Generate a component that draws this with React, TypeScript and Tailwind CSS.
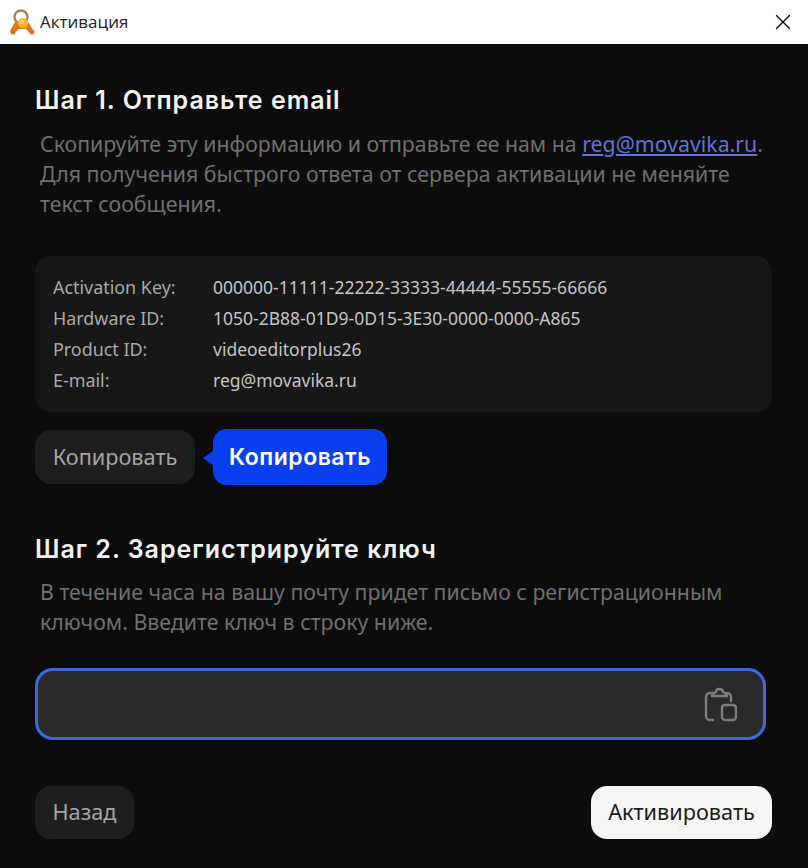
import React from "react";
import { X } from "lucide-react";

const rows = [
  ["Activation Key:", "000000-11111-22222-33333-44444-55555-66666"],
  ["Hardware ID:", "1050-2B88-01D9-0D15-3E30-0000-0000-A865"],
  ["Product ID:", "videoeditorplus26"],
  ["E-mail:", "reg@movavika.ru"],
];

const KeyIcon = () => (
  <svg width="26" height="28" viewBox="0 0 26 28" className="shrink-0">
    <circle cx="12" cy="9" r="6.5" fill="none" stroke="#a8825e" strokeWidth="2.4" />
    <path d="M1 23 L6 14 L14 12 L20 15 L25 24 L22 26 L17 21 L10 21 L4 26 Z" fill="#dd7a1c" />
    <circle cx="4" cy="24" r="2.5" fill="#e0701a" />
    <circle cx="23" cy="24" r="2.5" fill="#e0701a" />
    <circle cx="14" cy="15" r="5" fill="#f5b52e" />
    <circle cx="13" cy="14" r="2" fill="#fbd86a" />
  </svg>
);

const ClipboardIcon = () => (
  <svg width="34" height="36" viewBox="0 0 34 36" fill="none" stroke="#7d7d7d" strokeWidth="2.4" strokeLinecap="round" strokeLinejoin="round">
    <path d="M10 34H7a4 4 0 0 1-4-4V11a4 4 0 0 1 4-4h2" />
    <path d="M23 7h1a4 4 0 0 1 4 4v4" />
    <path d="M9 10c0-3 2-3 4-4 0-4 7-4 7 0 2 1 4 1 4 4z" />
    <rect x="19" y="19" width="14" height="15" rx="3" />
  </svg>
);

export default function App() {
  return (
    <div className="w-[808px] h-[868px] overflow-hidden flex flex-col bg-[#0c0c0d] font-['Noto_Sans',sans-serif]">
      <div className="h-[44px] bg-white flex items-center pl-[9px] pr-[12px] text-black">
        <KeyIcon />
        <span className="ml-[5px] text-[17px] font-['Open_Sans',sans-serif] text-[#222]">Активация</span>
        <X size={26} strokeWidth={1.2} className="ml-auto" />
      </div>

      <div className="flex-1 flex flex-col pl-[35px] pr-[36px] pt-[39px]">
        <h1 className="text-[25px] leading-[34px] font-semibold tracking-[1px] text-[#f2f2f2] font-['Inter',sans-serif]">Шаг 1. Отправьте email</h1>
        <p className="mt-[12px] pl-[5px] text-[21.3px] leading-[30px] text-[#6f6f6f]">
          Скопируйте эту информацию и отправьте ее нам на <a className="text-[#5f74d8] underline">reg@movavika.ru</a>.
          <br />
          Для получения быстрого ответа от сервера активации не меняйте
          <br />
          текст сообщения.
        </p>

        <div className="mt-[37px] h-[156px] rounded-[16px] bg-[#171718] px-[18px] py-[16px] flex flex-col text-[17.5px] leading-[31px] text-[#a9a9a9]">
          {rows.map(([label, value]) => (
            <div key={label} className="flex">
              <span className="w-[160px] text-[17.9px]">{label}</span>
              <span className="text-[#c4c4c4]">{value}</span>
            </div>
          ))}
        </div>

        <div className="mt-[17px] flex items-center">
          <button className="h-[54px] w-[160px] rounded-[16px] bg-[#1e1e1f] text-[21.7px] text-[#a5a5a5]">Копировать</button>
          <div className="relative ml-[18px] h-[56px] w-[174px] rounded-[14px] bg-[#0a3ff0] text-white text-[23px] font-semibold tracking-[0.5px] font-['Inter',sans-serif] flex items-center justify-center">
            Копировать
            <span className="absolute left-[-10px] top-[22px] w-0 h-0 border-y-[7px] border-y-transparent border-r-[10px] border-r-[#0a3ff0]" />
          </div>
        </div>

        <h1 className="mt-[47px] text-[25px] leading-[34px] font-semibold tracking-[1px] text-[#f2f2f2] font-['Inter',sans-serif]">Шаг 2. Зарегистрируйте ключ</h1>
        <p className="mt-[11px] pl-[5px] text-[21.3px] leading-[30px] text-[#6f6f6f]">
          В течение часа на вашу почту придет письмо с регистрационным
          <br />
          ключом. Введите ключ в строку ниже.
        </p>

        <div className="mt-[31px] mr-[6px] h-[72px] rounded-[18px] border-[3px] border-[#3d68dc] bg-[#2a2a2b] flex items-center justify-end pr-[26px]">
          <ClipboardIcon />
        </div>

        <div className="mt-[46px] flex items-center justify-between">
          <button className="h-[53px] w-[99px] rounded-[16px] bg-[#1e1e1f] text-[21.7px] text-[#a5a5a5]">Назад</button>
          <button className="h-[53px] w-[181px] rounded-[16px] bg-[#f5f5f5] text-[21.7px] text-[#1c1c1c]">Активировать</button>
        </div>
      </div>
    </div>
  );
}
